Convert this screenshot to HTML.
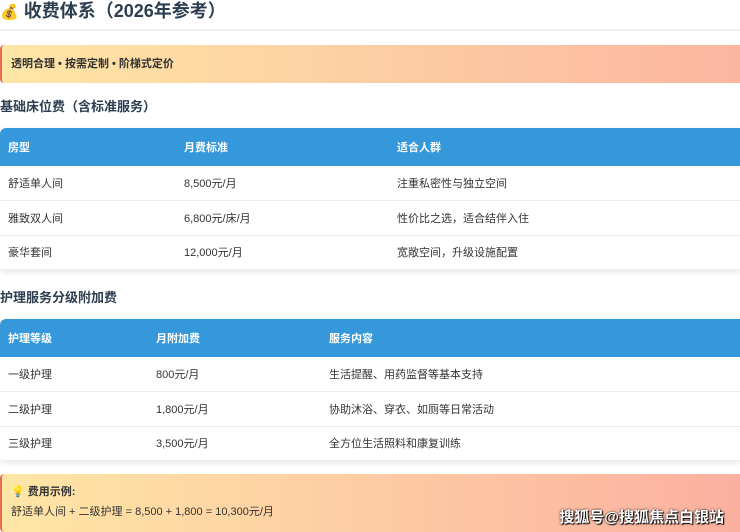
<!DOCTYPE html>
<html><head><meta charset="utf-8"><style>
*{margin:0;padding:0;box-sizing:border-box}
body{width:740px;height:532px;overflow:hidden;background:#fff;font-family:"Liberation Sans","Noto Sans CJK SC",sans-serif;color:#333;position:relative}
.t{position:absolute;left:0;top:0;font-size:18px;font-weight:bold;color:#2c3e50;height:31px;line-height:22px;width:740px;border-bottom:2px solid #eef2f4}
.ban{position:absolute;left:0;top:45px;width:740px;height:38px;background:linear-gradient(90deg,#ffe6a6,#fbb6a0);border-left:2px solid #e86a4f;border-radius:4px 0 0 4px;font-size:11px;font-weight:bold;line-height:38px;padding-left:9px;color:#333}
.h{position:absolute;left:0;font-size:13px;font-weight:bold;color:#2c3e50}
table{position:absolute;left:0;width:740px;border-collapse:collapse;font-size:11px;box-shadow:0 2px 6px rgba(0,0,0,.1);border-radius:6px 0 0 6px;overflow:hidden}
th{background:#3498db;color:#fff;text-align:left;font-weight:bold;height:38px;padding-left:8px}
td{height:34.5px;padding-left:8px;border-bottom:1px solid #eee;color:#333}
.ex{position:absolute;left:0;top:474px;width:740px;height:58px;background:linear-gradient(90deg,#ffe6a6,#fbb0a0);border-left:2px solid #e86a4f;border-radius:4px 0 0 4px;padding:9px 0 0 9px;font-size:11px}
.wm{position:absolute;right:16px;top:506px;color:#fff;font-size:15px;font-weight:bold;text-shadow:0 0 2px #000,1px 1px 1px #000}
</style></head><body>
<div class="t"><span style="font-size:15px">💰</span> 收费体系（2026年参考）</div>
<div class="ban">透明合理 • 按需定制 • 阶梯式定价</div>
<div class="h" style="top:96px">基础床位费（含标准服务）</div>
<table style="top:128px"><tr><th style="width:176px">房型</th><th style="width:213px">月费标准</th><th>适合人群</th></tr>
<tr><td>舒适单人间</td><td>8,500元/月</td><td>注重私密性与独立空间</td></tr>
<tr><td>雅致双人间</td><td>6,800元/床/月</td><td>性价比之选，适合结伴入住</td></tr>
<tr><td>豪华套间</td><td>12,000元/月</td><td>宽敞空间，升级设施配置</td></tr></table>
<div class="h" style="top:287px">护理服务分级附加费</div>
<table style="top:319px"><tr><th style="width:148px">护理等级</th><th style="width:173px">月附加费</th><th>服务内容</th></tr>
<tr><td>一级护理</td><td>800元/月</td><td>生活提醒、用药监督等基本支持</td></tr>
<tr><td>二级护理</td><td>1,800元/月</td><td>协助沐浴、穿衣、如厕等日常活动</td></tr>
<tr><td>三级护理</td><td>3,500元/月</td><td>全方位生活照料和康复训练</td></tr></table>
<div class="ex"><b>💡 费用示例:</b><div style="margin-top:4px">舒适单人间 + 二级护理 = 8,500 + 1,800 = 10,300元/月</div></div>
<div class="wm">搜狐号@搜狐焦点白银站</div>
</body></html>
